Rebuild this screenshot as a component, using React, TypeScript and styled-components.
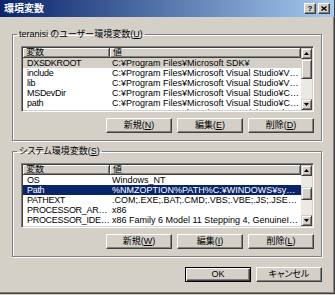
import React from "react"
import styled, { createGlobalStyle } from "styled-components"

type Sel = "focus" | "idle" | undefined

interface EnvRow {
    name: string
    value: string
    sel?: Sel
}

const userVars: EnvRow[] = [
    { name: "DXSDKROOT", value: "C:¥Program Files¥Microsoft SDK¥", sel: "idle" },
    { name: "include", value: "C:¥Program Files¥Microsoft Visual Studio¥VC98¥atl¥include;C:¥Program Files" },
    { name: "lib", value: "C:¥Program Files¥Microsoft Visual Studio¥VC98¥mfc¥lib;C:¥Program Files" },
    { name: "MSDevDir", value: "C:¥Program Files¥Microsoft Visual Studio¥Common¥MSDev98" },
    { name: "path", value: "C:¥Program Files¥Microsoft Visual Studio¥Common¥Tools¥WinNT;C:¥Program" },
    { name: "TEMP", value: "C:¥Documents and Settings¥teranisi¥Local Settings¥Temp" },
]

const systemVars: EnvRow[] = [
    { name: "OS", value: "Windows_NT" },
    { name: "Path", value: "%NMZOPTION%PATH%C:¥WINDOWS¥system32;C:¥WINDOWS;C:¥WINDOWS¥System32¥Wbem", sel: "focus" },
    { name: "PATHEXT", value: ".COM;.EXE;.BAT;.CMD;.VBS;.VBE;.JS;.JSE;.WSF;.WSH" },
    { name: "PROCESSOR_ARCHITECTURE", value: "x86" },
    { name: "PROCESSOR_IDENTIFIER", value: "x86 Family 6 Model 11 Stepping 4, GenuineIntel" },
    { name: "PROCESSOR_LEVEL", value: "6" },
]

const NAME_COL = 87

const Arrow = ({ down }: { down?: boolean }) => (
    <svg width="5" height="3" viewBox="0 0 5 3">
        <path d={down ? "M0 0h5L2.5 3z" : "M2.5 0L5 3H0z"} fill="#000" />
    </svg>
)

const EnvList = ({ rows, height, thumbTop, thumbSize }: { rows: EnvRow[], height: number, thumbTop: number, thumbSize: number }) => (
    <ListBox style={{ height }}>
        <ListBody>
            <HeaderRow>
                <HeaderCell $w={NAME_COL}>変数</HeaderCell>
                <HeaderCell>値</HeaderCell>
            </HeaderRow>
            {rows.map((row) =>
                <Row key={row.name} $sel={row.sel}>
                    <NameCell>{row.name}</NameCell>
                    <ValueCell>{row.value}</ValueCell>
                </Row>
            )}
        </ListBody>
        <Scrollbar>
            <ScrollArrow><Arrow /></ScrollArrow>
            <Track style={{ height: thumbTop }} />
            <Thumb style={{ height: thumbSize }} />
            <Track $grow />
            <ScrollArrow><Arrow down /></ScrollArrow>
        </Scrollbar>
    </ListBox>
)

export default function App() {
    return (
        <>
            <GlobalStyle />
            <Window>
                <TitleBar>
                    <Title>環境変数</Title>
                    <CapButtons>
                        <CapButton>?</CapButton>
                        <CapButton>
                            <svg width="6" height="5" viewBox="0 0 6 5">
                                <path d="M0.5 0.5L5.5 4.5M5.5 0.5L0.5 4.5" stroke="#000" strokeWidth="1.4" />
                            </svg>
                        </CapButton>
                    </CapButtons>
                </TitleBar>
                <Body>
                    <Group>
                        <Legend>teranisi のユーザー環境変数(<u>U</u>)</Legend>
                        <EnvList rows={userVars} height={66} thumbTop={0} thumbSize={20} />
                        <ButtonRow>
                            <Button>新規(<u>N</u>)</Button>
                            <Button>編集(<u>E</u>)</Button>
                            <Button>削除(<u>D</u>)</Button>
                        </ButtonRow>
                    </Group>
                    <Group>
                        <Legend>システム環境変数(<u>S</u>)</Legend>
                        <EnvList rows={systemVars} height={65} thumbTop={11} thumbSize={13} />
                        <ButtonRow>
                            <Button>新規(<u>W</u>)</Button>
                            <Button>編集(<u>I</u>)</Button>
                            <Button>削除(<u>L</u>)</Button>
                        </ButtonRow>
                    </Group>
                    <DialogButtons>
                        <Button $default>OK</Button>
                        <Button>キャンセル</Button>
                    </DialogButtons>
                </Body>
            </Window>
        </>
    )
}

const GlobalStyle = createGlobalStyle`
    html, body {
        margin: 0;
        padding: 0;
        background: #d4d0c8;
    }
    body {
        font-family: "Liberation Sans", "Noto Sans CJK JP", sans-serif;
        font-size: 9px;
        font-feature-settings: "palt";
        color: #000;
    }
    * {
        box-sizing: border-box;
    }
`

const Window = styled.div`
    width: 335px;
    height: 294px;
    display: flex;
    flex-direction: column;
    background: #d4d0c8;
    border-right: 1px solid #404040;
    border-bottom: 1px solid #404040;
    box-shadow: inset -1px -1px 0 #808080;
    overflow: hidden;
`

const TitleBar = styled.div`
    height: 17px;
    flex: none;
    display: flex;
    align-items: center;
    justify-content: space-between;
    padding: 0 4px 0 4px;
    background: linear-gradient(to right, #0a246a, #a6caf0);
`

const Title = styled.span`
    color: #fff;
    font-weight: bold;
    font-size: 10px;
    line-height: 17px;
`

const CapButtons = styled.div`
    display: flex;
    gap: 2px;
`

const CapButton = styled.div`
    width: 12px;
    height: 11px;
    display: flex;
    align-items: center;
    justify-content: center;
    background: #d4d0c8;
    border: 1px solid;
    border-color: #fff #404040 #404040 #fff;
    box-shadow: inset -1px -1px 0 #808080;
    font: bold 8px "Liberation Sans", sans-serif;
    line-height: 1;
`

const Body = styled.div`
    flex: 1;
    min-width: 0;
    display: flex;
    flex-direction: column;
    padding: 12px 12px 0 12px;
`

const Group = styled.fieldset`
    min-width: 0;
    margin: 0;
    padding: 7px 7px 7px 8px;
    border: 1px solid #808080;
    box-shadow: 1px 1px 0 #fff, inset 1px 1px 0 #fff;

    & + & {
        margin-top: 5px;
    }
`

const Legend = styled.legend`
    padding: 0 2px;
    margin-left: -4px;
    line-height: 10px;
    font-size: 9px;
`

const ListBox = styled.div`
    display: flex;
    min-width: 0;
    padding: 1px;
    background: #fff;
    border: 1px solid;
    border-color: #808080 #fff #fff #808080;
    box-shadow: inset 1px 1px 0 #404040, inset -1px -1px 0 #d4d0c8;
`

const ListBody = styled.div`
    flex: 1;
    min-width: 0;
    overflow: hidden;
`

const HeaderRow = styled.div`
    display: flex;
    height: 10px;
`

const HeaderCell = styled.div<{ $w?: number }>`
    width: ${p => p.$w ? `${p.$w}px` : "auto"};
    flex: ${p => p.$w ? "none" : 1};
    padding-left: 3px;
    line-height: 9px;
    background: #d4d0c8;
    border-right: 1px solid #404040;
    border-bottom: 1px solid #404040;
    box-shadow: inset 1px 1px 0 #fff, inset -1px -1px 0 #808080;
`

const Row = styled.div<{ $sel?: Sel }>`
    display: flex;
    height: 10px;
    line-height: 10px;
    background: ${p => p.$sel === "focus" ? "#0a246a" : p.$sel === "idle" ? "#d4d0c8" : "transparent"};
    color: ${p => p.$sel === "focus" ? "#fff" : "#000"};
`

const NameCell = styled.div`
    width: ${NAME_COL}px;
    flex: none;
    padding: 0 0 0 4px;
    letter-spacing: -0.3px;
    white-space: nowrap;
    overflow: hidden;
    text-overflow: ellipsis;
`

const ValueCell = styled.div`
    flex: 1;
    min-width: 0;
    padding: 0 2px 0 2px;
    white-space: nowrap;
    overflow: hidden;
    text-overflow: ellipsis;
`

const Scrollbar = styled.div`
    width: 11px;
    flex: none;
    display: flex;
    flex-direction: column;
    background: #ebe9e4;
`

const ScrollArrow = styled.div`
    height: 11px;
    flex: none;
    display: flex;
    align-items: center;
    justify-content: center;
    background: #d4d0c8;
    border: 1px solid;
    border-color: #d4d0c8 #404040 #404040 #d4d0c8;
    box-shadow: inset 1px 1px 0 #fff, inset -1px -1px 0 #808080;
`

const Track = styled.div<{ $grow?: boolean }>`
    flex: ${p => p.$grow ? 1 : "none"};
`

const Thumb = styled(ScrollArrow)``

const ButtonRow = styled.div`
    display: flex;
    justify-content: flex-end;
    gap: 5px;
    margin-top: 6px;
`

const DialogButtons = styled(ButtonRow)`
    margin-top: 10px;
`

const Button = styled.button<{ $default?: boolean }>`
    width: 66px;
    height: 15px;
    padding: 0;
    font: inherit;
    font-size: 9px;
    line-height: 13px;
    color: #000;
    background: #d4d0c8;
    border: 1px solid;
    border-color: ${p => p.$default ? "#000" : "#fff #404040 #404040 #fff"};
    box-shadow: ${p => p.$default
        ? "inset 1px 1px 0 #fff, inset -1px -1px 0 #404040, inset -2px -2px 0 #808080"
        : "inset -1px -1px 0 #808080"};
`
